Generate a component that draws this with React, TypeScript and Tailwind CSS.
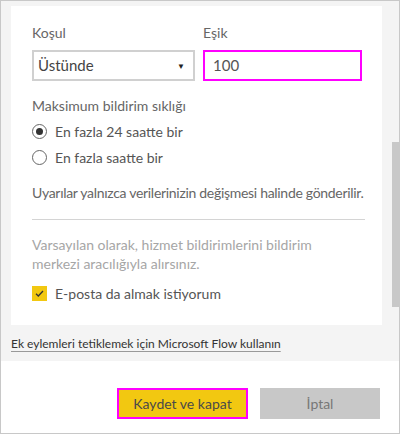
import React from 'react';

const font = { fontFamily: 'Lato, "Open Sans", sans-serif' };

function Radio({ checked, label }: { checked: boolean; label: string }) {
  return (
    <div className="flex items-center h-[26px]">
      <span className="w-[15px] h-[15px] rounded-full border border-[#666] bg-white flex items-center justify-center">
        {checked && <span className="w-[7px] h-[7px] rounded-full bg-[#333]" />}
      </span>
      <span className="ml-[8px] text-[14px] text-[#555]">{label}</span>
    </div>
  );
}

export default function App() {
  return (
    <div
      className="w-[400px] h-[434px] border border-[#c8c8c8] flex flex-col bg-white overflow-hidden"
      style={font}
    >
      <div className="bg-[#f4f4f4] h-[360px] flex flex-col">
        <div className="flex pt-[5px] pl-[10px]">
          <div className="w-[371px] h-[319px] bg-white pt-[17px] pl-[21px] pr-[17px]">
            <div className="flex gap-[8px]">
              <div className="w-[163px]">
                <div className="text-[14px] leading-[20px] text-[#666]">Koşul</div>
                <div className="mt-[7px] h-[31px] border-2 border-[#d0d0d0] flex items-center justify-between pl-[4px] pr-[8px]">
                  <span className="text-[15px] text-[#444]">Üstünde</span>
                  <span className="text-[8px] text-[#222]">▼</span>
                </div>
              </div>
              <div className="w-[159px]">
                <div className="text-[14px] leading-[20px] text-[#666]">Eşik</div>
                <div className="mt-[7px] h-[31px] border-2 border-[#ff00ff] flex items-center pl-[8px]">
                  <span className="text-[15px] text-[#555]">100</span>
                </div>
              </div>
            </div>

            <div className="mt-[15px] text-[14px] leading-[20px] text-[#666]">Maksimum bildirim sıklığı</div>
            <div className="mt-[2px]">
              <Radio checked label="En fazla 24 saatte bir" />
              <Radio checked={false} label="En fazla saatte bir" />
            </div>

            <div className="mt-[13px] text-[14px] leading-[20px] text-[#666] whitespace-nowrap tracking-[-0.3px]">
              Uyarılar yalnızca verilerinizin değişmesi halinde gönderilir.
            </div>
            <div className="mt-[16px] h-px bg-[#d4d4d4] w-[333px]" />

            <div className="mt-[15px] text-[14px] leading-[19px] text-[#a6a6a6] w-[300px]">
              Varsayılan olarak, hizmet bildirimlerini bildirim merkezi aracılığıyla alırsınız.
            </div>

            <div className="mt-[10px] flex items-center">
              <span className="w-[15px] h-[15px] bg-[#f2c811] flex items-center justify-center">
                <svg width="11" height="11" viewBox="0 0 11 11">
                  <path d="M2 5.8 L4.3 8 L9 3" fill="none" stroke="#333" strokeWidth="1.3" />
                </svg>
              </span>
              <span className="ml-[8px] text-[14px] text-[#555]">E-posta da almak istiyorum</span>
            </div>
          </div>

          <div className="ml-[10px] mt-[136px] w-[7px] h-[165px] bg-[#c8c8c8]" />
        </div>

        <div className="pl-[10px] mt-[5px]">
          <a className="text-[12px] leading-[20px] text-[#333] underline decoration-[#999] underline-offset-[3px]">
            Ek eylemleri tetiklemek için Microsoft Flow kullanın
          </a>
        </div>
      </div>

      <div className="flex justify-end gap-[12px] pr-[19px] mt-[27px]">
        <button className="w-[131px] h-[31px] bg-[#f2c811] border-2 border-[#ff00ff] text-[14px] text-[#4a4a4a]">
          Kaydet ve kapat
        </button>
        <button className="w-[120px] h-[31px] bg-[#c8c8c8] text-[14px] text-[#777]">İptal</button>
      </div>
    </div>
  );
}
